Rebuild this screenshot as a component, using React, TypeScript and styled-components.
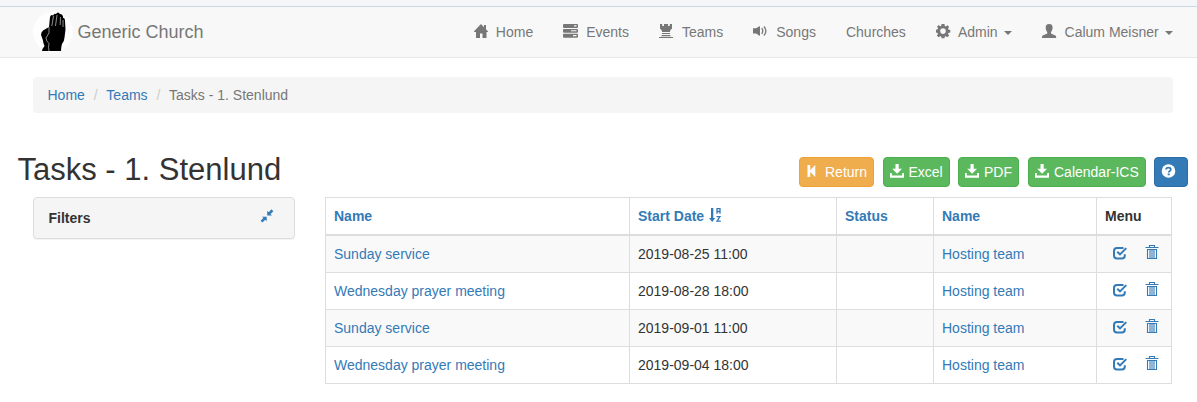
import React from "react";
import styled, { createGlobalStyle } from "styled-components";

const GlobalStyle = createGlobalStyle`
  *, *::before, *::after { box-sizing: border-box; }
  body {
    margin: 0;
    background: #fff;
    color: #333;
    font: 14px/20px "Liberation Sans", Arial, sans-serif;
  }
  a { color: #337ab7; text-decoration: none; }
`;

const TopStrip = styled.div`
  height: 7px;
  background: #f5f6f7;
  border-bottom: 1px solid #cdd6e9;
`;

const Navbar = styled.nav`
  display: flex;
  justify-content: space-between;
  height: 51px;
  padding: 0 9.300px 0 33px;
  background: #f8f8f8;
  border-bottom: 1px solid #e7e7e7;
`;

const Brand = styled.a`
  && { color: #777; }
  display: flex;
  align-items: center;
  gap: 4.500px;
  font-size: 18px;
`;

const NavList = styled.div`
  display: flex;
`;

const NavItem = styled.a`
  && { color: #777; }
  display: flex;
  padding: 15px;
  white-space: pre;
`;

const Glyph = styled.svg<{ $gap?: number; $top?: number }>`
  flex: none;
  display: inline-block;
  width: 14px;
  height: 14px;
  margin-top: ${(p) => p.$top ?? 2}px;
  margin-right: ${(p) => p.$gap ?? 0}px;
  fill: currentColor;
`;

const Caret = styled.span`
  align-self: center;
  margin: 2px 0 0 6px;
  border-top: 4px solid currentColor;
  border-left: 4px solid transparent;
  border-right: 4px solid transparent;
`;

const Breadcrumb = styled.div`
  display: flex;
  margin: 19px 24px 0 33px;
  padding: 8px 14.500px;
  border-radius: 4px;
  background: #f5f5f5;
  color: #777;
`;

const Separator = styled.span`
  padding: 0 8.800px;
  color: #ccc;
`;

const Heading = styled.header`
  display: flex;
  justify-content: space-between;
  align-items: flex-start;
  margin-top: 39px;
  padding: 0 9px 0 17.500px;
  height: 45px;
`;

const Title = styled.h1`
  margin: 1px 0 0;
  font-size: 31px;
  line-height: 34px;
  font-weight: 400;
`;

const Actions = styled.div`
  display: flex;
  padding-top: 5px;
`;

const tones = {
  warning: ["#f0ad4e", "#eea236"],
  success: ["#5cb85c", "#4cae4c"],
  primary: ["#337ab7", "#2e6da4"],
};

const Button = styled.button<{ $tone: keyof typeof tones; $width: number; $after?: number }>`
  display: flex;
  width: ${(p) => p.$width}px;
  height: 30px;
  margin: 0 ${(p) => p.$after ?? 0}px 0 0;
  padding: 4px 6px;
  border: 1px solid ${(p) => tones[p.$tone][1]};
  border-radius: 4px;
  background: ${(p) => tones[p.$tone][0]};
  color: #fff;
  font: inherit;
  white-space: nowrap;
`;

const Content = styled.main`
  display: flex;
  align-items: flex-start;
  gap: 30px;
  padding-left: 33px;
`;

const Panel = styled.section`
  display: flex;
  justify-content: space-between;
  width: 262px;
  height: 42px;
  padding: 10px 20px 10px 14.500px;
  border: 1px solid #ddd;
  border-radius: 4px;
  background: #f5f5f5;
  box-shadow: 0 1px 1px rgba(0, 0, 0, 0.05);
  font-weight: 700;
`;

const Table = styled.table`
  width: 847px;
  table-layout: fixed;
  border-spacing: 0;
  border-top: 1px solid #ddd;
  border-left: 1px solid #ddd;
`;

const HeadCell = styled.th<{ $width: number }>`
  width: ${(p) => p.$width}px;
  height: 38px;
  padding: 8px;
  border-right: 1px solid #ddd;
  border-bottom: 2px solid #ddd;
  text-align: left;
  vertical-align: top;
`;

const Row = styled.tr`
  &:nth-child(odd) { background: #f9f9f9; }
`;

const Cell = styled.td`
  height: 37px;
  padding: 8px;
  border-right: 1px solid #ddd;
  border-bottom: 1px solid #ddd;
  vertical-align: top;
`;

const HeadLink = styled.a`
  display: flex;
  gap: 1px;
`;

const RowMenu = styled.a`
  display: flex;
  gap: 18px;
  padding-left: 8px;
`;

const paths: Record<string, React.ReactNode> = {
  home: <path d="M7 0 0 7.300q-.2.700.4.700H2v5.500q0 .5.500.5H6V9.500h2.500V14H12q.5 0 .5-.5V8h1.200q.6 0 .3-.6L12 5.200V1h-2v2.200Z" />,
  tasks: (
    <path
      fillRule="evenodd"
      d="M1 0h13q1 0 1 1v2q0 1-1 1H1Q0 4 0 3V1q0-1 1-1ZM11 1.300v1.200h2.500V1.300ZM1 5h13q1 0 1 1v1.700q0 1-1 1H1q-1 0-1-1V6q0-1 1-1ZM8 6.200v1h5.500v-1ZM1 9.700h13q1 0 1 1v2q0 1-1 1H1q-1 0-1-1v-2q0-1 1-1ZM10 11v1.200h3.500V11Z"
    />
  ),
  tower: <path d="M1 0h2.200v2H5V0h4v2h1.800V0H13v4.500L11 6.800V8H3V6.800L1 4.500ZM3 9h8v1H3ZM3 11h8l1 1.200H2ZM0 13h14v1H0Z" />,
  volume: (
    <>
      <path d="M0 4.200h3L7 2v10L3 9.500H0Z" />
      <path d="M8.700 4.200q2.200 2.800 0 5.600M11 2.500q3.800 4.500 0 9" fill="none" stroke="currentColor" strokeWidth="1.300" />
    </>
  ),
  cog: (
    <path
      fillRule="evenodd"
      d="M5.500 0h3l.3 2 1 .4 1.600-1.200 1.800 1.800-1.200 1.600.4 1 1.900.3v2.600l-1.900.4-.4 1 1.200 1.700-1.700 1.700-1.700-1.100-1 .4-.3 1.700H5.600l-.4-1.700-1-.4-1.700 1.100L.8 11.600 2 9.900l-.4-1L0 8.500V5.700l1.700-.4.400-1L1 2.800l1.700-1.700 1.500 1.200 1-.4ZM7 4.300a2.800 2.800 0 1 0 0 5.600 2.800 2.800 0 0 0 0-5.600Z"
    />
  ),
  user: <path d="M3.700 3.500C3.700 1 5 0 7.200 0s3.400 1 3.400 3.500c0 2.300-.8 3.600-1.600 4.700v1.300c1.200.8 3 1.200 4.300 1.900.6.4.9.900.9 2.600H0c0-1.700.2-2.200.8-2.600 1.300-.7 3.200-1 4.500-1.900V8.200c-.8-1.100-1.600-2.400-1.600-4.700Z" />,
  back: <path d="M1.500 1h2.700v5L9.300 1v12L4.200 8v5H1.500Z" />,
  download: <path d="M5.500 0h3.200v4.800h3.300L7.100 9.800 2.200 4.800h3.300ZM0 9h1.800v2.500h10.400V9H14v4.800H0Z" />,
  help: (
    <>
      <circle cx="7.500" cy="7" r="6.800" />
      <path d="M5 5.500Q5.200 3.700 7.400 3.700c3 0 2.900 2.200 1.400 3.300-.8.500-1 .7-1 1.500M6.700 10.400h2" fill="none" stroke="#337ab7" strokeWidth="1.800" />
    </>
  ),
  compress: <path d="M7.200 1.700 8.700 3.200 11.500.3l1.900 1.900-2.900 2.700L12 6.400H7.200ZM2 7.700h4.700v4.600l-1.500-1.500-2.800 2.700L.6 11.800l2.800-2.700Z" />,
  sort: (
    <>
      <path d="M2 0h2.300v10H6.300l-3.100 4-3.200-4h2Z" />
      <path d="M8 5.800V.7h3v5.100M8 3.500h3M7.500 8.600h3.500L8 13.200h3.800" fill="none" stroke="currentColor" strokeWidth="1.300" />
    </>
  ),
  check: (
    <path
      d="M10.500 2H4Q1 2 1 5v4.500q0 3 3 3h4.800q3 0 3-3V8.300M4.300 5.700 7 8.400l6.300-6.300"
      fill="none"
      stroke="currentColor"
      strokeWidth="2"
    />
  ),
  trash: (
    <path
      d="M.5 2.500h13M4.500 2V.5h5V2M2.500 4.500h9M2.500 4v9.500h9V4M5 5v8.500M7 5v8.500M9 5v8.500"
      fill="none"
      stroke="currentColor"
      strokeWidth="1.100"
    />
  ),
};

const Icon = ({ name, gap, top }: { name: string; gap?: number; top?: number }) => (
  <Glyph viewBox="0 0 14 14" overflow="visible" $gap={gap} $top={top} aria-hidden="true">
    {paths[name]}
  </Glyph>
);

const PrayingHands = () => (
  <svg width="40" height="40" viewBox="0 0 40 40" aria-hidden="true">
    <circle cx="20" cy="20" r="20" fill="#fefefe" />
    <path d="M9 39q0-2 2.500-5Q10 31 10 28.500q-1-3-2-5.500 0-3 2-4.500l6-3.500 1-10q1-3 3.200-1.500Q21 1 23 2q2-3 4 0 3 0 3.200 4 1.800 0 1.800 3l.5 8.500-1 8q0 3-2.500 6.500-1 3-1 7Z" />
    <path d="M16 15v6l-3 5q0 3 3 5.500-1 3.500 0 7.500M20.500 4l-1.700 10M24 3l-1.500 11M27.500 5l-.3 8M30 8v7" fill="none" stroke="#ccc" strokeWidth=".7" />
  </svg>
);

const nav = [
  { icon: "home", label: "Home" },
  { icon: "tasks", label: "Events", gap: 9 },
  { icon: "tower", label: "Teams", gap: 9 },
  { icon: "volume", label: "Songs", gap: 9 },
  { label: "Churches" },
  { icon: "cog", label: "Admin", menu: true },
  { icon: "user", label: "Calum Meisner", menu: true, gap: 9 },
];

const tasks = [
  ["Sunday service", "2019-08-25 11:00"],
  ["Wednesday prayer meeting", "2019-08-28 18:00"],
  ["Sunday service", "2019-09-01 11:00"],
  ["Wednesday prayer meeting", "2019-09-04 18:00"],
];

export default function App() {
  return (
    <>
      <GlobalStyle />
      <TopStrip />
      <Navbar>
        <Brand href="#"><PrayingHands />Generic Church</Brand>
        <NavList>
          {nav.map((item) => (
            <NavItem href="#" key={item.label}>
              {item.icon && <Icon name={item.icon} gap={item.gap ?? 8} />}
              {item.label}
              {item.menu && <Caret />}
            </NavItem>
          ))}
        </NavList>
      </Navbar>
      <Breadcrumb>
        <a href="#">Home</a><Separator>/</Separator>
        <a href="#">Teams</a><Separator>/</Separator>
        <span>Tasks - 1. Stenlund</span>
      </Breadcrumb>
      <Heading>
        <Title>Tasks - 1. Stenlund</Title>
        <Actions>
          <Button $tone="warning" $width={75} $after={9}><Icon name="back" gap={5} />Return</Button>
          <Button $tone="success" $width={67} $after={8}><Icon name="download" gap={4.5} />Excel</Button>
          <Button $tone="success" $width={61} $after={9}><Icon name="download" gap={5} />PDF</Button>
          <Button $tone="success" $width={118} $after={8}><Icon name="download" gap={5} />Calendar-ICS</Button>
          <Button $tone="primary" $width={34}><Icon name="help" /></Button>
        </Actions>
      </Heading>
      <Content>
        <Panel>
          Filters
          <a href="#"><Icon name="compress" top={1} /></a>
        </Panel>
        <Table>
          <thead>
            <tr>
              <HeadCell $width={304}><a href="#">Name</a></HeadCell>
              <HeadCell $width={207}><HeadLink href="#">Start Date&nbsp;<Icon name="sort" /></HeadLink></HeadCell>
              <HeadCell $width={97}><a href="#">Status</a></HeadCell>
              <HeadCell $width={163}><a href="#">Name</a></HeadCell>
              <HeadCell $width={75}>Menu</HeadCell>
            </tr>
          </thead>
          <tbody>
            {tasks.map(([name, date]) => (
              <Row key={date}>
                <Cell><a href="#">{name}</a></Cell>
                <Cell>{date}</Cell>
                <Cell />
                <Cell><a href="#">Hosting team</a></Cell>
                <Cell><RowMenu href="#"><Icon name="check" /><Icon name="trash" top={1} /></RowMenu></Cell>
              </Row>
            ))}
          </tbody>
        </Table>
      </Content>
    </>
  );
}
